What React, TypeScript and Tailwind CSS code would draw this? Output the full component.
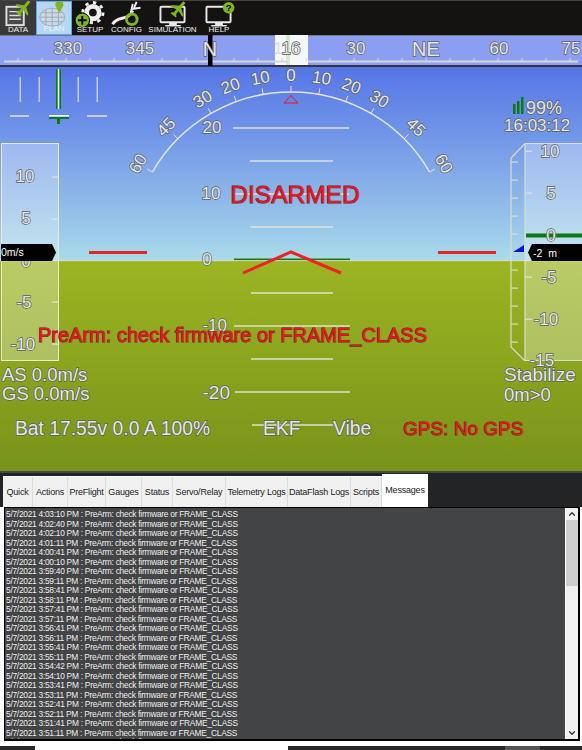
import { ChevronDown, ChevronUp } from 'lucide-react';

const tabs = [
  { label: 'Quick', w: 'w-[30px]' },
  { label: 'Actions', w: 'w-[35px]' },
  { label: 'PreFlight', w: 'w-[38px]' },
  { label: 'Gauges', w: 'w-[36px]' },
  { label: 'Status', w: 'w-[31px]' },
  { label: 'Servo/Relay', w: 'w-[53px]' },
  { label: 'Telemetry Logs', w: 'w-[62px]' },
  { label: 'DataFlash Logs', w: 'w-[63px]' },
  { label: 'Scripts', w: 'w-[31px]' },
];

const times = [
  '4:03:10', '4:02:40', '4:02:10', '4:01:11', '4:00:41', '4:00:10', '3:59:40', '3:59:11', '3:58:41',
  '3:58:11', '3:57:41', '3:57:11', '3:56:41', '3:56:11', '3:55:41', '3:55:11', '3:54:42', '3:54:10',
  '3:53:41', '3:53:11', '3:52:41', '3:52:11', '3:51:41', '3:51:11', '3:50:41',
];

// x position on the compass for a heading relative to north
const compassX = (deg: number) => 210 + deg * 4.8;

function Plane({ x, y }: { x: number; y: number }) {
  return (
    <g transform={`translate(${x} ${y}) rotate(40)`} className="fill-[#7fb51e]">
      <path d="M-1.5 -9 L1.5 -9 L1.5 -2 L8 2 L8 4 L1.5 2 L1.5 6 L3.5 8 L3.5 9 L-3.5 9 L-3.5 8 L-1.5 6 L-1.5 2 L-8 4 L-8 2 L-1.5 -2 Z" />
    </g>
  );
}

function Monitor() {
  return (
    <>
      <rect x="5" y="6" width="25" height="16" rx="1" className="fill-none stroke-[#e8e8e8] stroke-2" />
      <path d="M14 22 V25 H10 V26.5 H26 V25 H22 V22" className="fill-[#e8e8e8]" />
    </>
  );
}

function ToolIcon({ name }: { name: string }) {
  return (
    <svg viewBox="0 0 36 28" className="w-[36px] h-[27px]">
      {name === 'data' && (
        <>
          <rect x="6" y="6" width="18" height="19" className="fill-[#4a4a4a] stroke-[#dddddd] stroke-2" />
          <path d="M9 11 H21 M9 15 H21 M9 19 H21" className="stroke-[#dddddd] stroke-[1.5]" />
          <Plane x={24} y={7} />
        </>
      )}
      {name === 'plan' && (
        <>
          <ellipse cx="16" cy="17" rx="14" ry="10" className="fill-[#cdd8e2] stroke-[#97a8b8]" />
          <path d="M2 17 H30 M4 12 H28 M4 22 H28 M9 9 V25 M16 7 V27 M23 9 V25" className="stroke-[#97a8b8] stroke-[1]" />
          <path d="M24 12 L20 5 A4.5 4.5 0 1 1 28 5 Z" className="fill-[#7fb51e]" />
        </>
      )}
      {name === 'setup' && (
        <>
          <circle cx="21" cy="12" r="6.5" className="fill-none stroke-[#eeeeee] stroke-[5]" />
          <circle cx="21" cy="12" r="10.5" className="fill-none stroke-[#eeeeee] stroke-[3]" strokeDasharray="3.5 4.7" />
          <circle cx="10" cy="20" r="7.5" className="fill-[#7fb51e] stroke-black" />
          <path d="M5.5 20 H14.5 M10 15.5 V24.5" className="stroke-black stroke-2" />
        </>
      )}
      {name === 'config' && (
        <>
          <path d="M3 24 C9 14 18 22 24 10" className="fill-none stroke-[#eeeeee] stroke-[3]" />
          <path d="M22 12 L24 3 M28 1 L25 8 L32 7" className="fill-none stroke-[#eeeeee] stroke-2" />
          <circle cx="23" cy="19" r="5.5" className="fill-none stroke-[#7fb51e] stroke-[3]" />
        </>
      )}
      {name === 'simulation' && (
        <>
          <Monitor />
          <Plane x={24} y={8} />
        </>
      )}
      {name === 'help' && (
        <>
          <Monitor />
          <circle cx="28" cy="7" r="6" className="fill-[#7fb51e]" />
          <text x="28" y="10.5" textAnchor="middle" className="fill-black text-[10px] font-bold">?</text>
        </>
      )}
    </svg>
  );
}

function ToolButton({ label, name, className }: { label: string; name: string; className: string }) {
  return (
    <div className={`flex flex-col items-center justify-start ${className}`}>
      <ToolIcon name={name} />
      <span className="text-[8px] leading-[10px] -mt-[3px]">{label}</span>
    </div>
  );
}

function HudText({ x, y, children, size = 'text-[17px]', anchor = 'middle', red = false }: {
  x: number; y: number; children: React.ReactNode; size?: string; anchor?: 'start' | 'middle' | 'end'; red?: boolean;
}) {
  return (
    <text
      x={x}
      y={y}
      textAnchor={anchor}
      className={`${size} [paint-order:stroke] ${red ? 'stroke-[1px] fill-[#f5101c] stroke-[#5c2a2a]' : 'stroke-[1.4px] fill-[#e6e6e6] stroke-[#5a5f60]'}`}
    >
      {children}
    </text>
  );
}

function Hud() {
  const ladder = [
    { y: 129, x1: 233, x2: 349 }, { y: 162, x1: 250, x2: 333 }, { y: 195, x1: 233, x2: 349 }, { y: 228, x1: 250, x2: 333 },
    { y: 294, x1: 251, x2: 333 }, { y: 327, x1: 234, x2: 350 }, { y: 360, x1: 251, x2: 333 }, { y: 393, x1: 235, x2: 350 },
    { y: 426, x1: 252, x2: 333 },
  ];
  const rollMarks = [
    { a: 0, t: '0' }, { a: 10, t: '10' }, { a: 20, t: '20' }, { a: 30, t: '30' }, { a: 45, t: '45' }, { a: 60, t: '60' },
    { a: -10, t: '10' }, { a: -20, t: '20' }, { a: -30, t: '30' }, { a: -45, t: '45' }, { a: -60, t: '60' },
  ];
  const compassTicks = Array.from({ length: 24 }, (_, i) => compassX(-40 + i * 5));

  return (
    <svg viewBox="0 36 582 436" className="w-[582px] h-[436px] block shrink-0">
      <defs>
        <linearGradient id="sky" x1="0" y1="0" x2="0" y2="1">
          <stop offset="0" stopColor="#5675e6" />
          <stop offset="0.35" stopColor="#7196e8" />
          <stop offset="0.7" stopColor="#8fbae8" />
          <stop offset="1" stopColor="#aadcea" />
        </linearGradient>
        <linearGradient id="ground" x1="0" y1="0" x2="0" y2="1">
          <stop offset="0" stopColor="#9cb522" />
          <stop offset="0.5" stopColor="#8aa41e" />
          <stop offset="1" stopColor="#78931a" />
        </linearGradient>
      </defs>

      {/* horizon */}
      <rect x="0" y="68" width="582" height="194" fill="url(#sky)" />
      <rect x="0" y="262" width="582" height="210" fill="url(#ground)" />
      <rect x="0" y="261" width="582" height="1.2" className="fill-[#d8d8c8]" />

      {/* compass */}
      <rect x="0" y="36" width="582" height="30" className="fill-[#8b9ef2]" />
      <rect x="0" y="35" width="582" height="2" className="fill-[#77797f]" />
      <rect x="0" y="66" width="582" height="2" className="fill-[#33353a]" />
      <rect x="275" y="36" width="33" height="30" className="fill-[#f4f8fb]" />
      <rect x="286" y="36" width="4" height="30" className="fill-[#d6ead0]" />
      <rect x="4" y="61.5" width="284" height="2" className="fill-[#d6d6d6]" />
      <rect x="308" y="61.5" width="270" height="2" className="fill-[#d6d6d6]" />
      {compassTicks.map((x) => (
        <rect key={x} x={x - 0.5} y="59" width="1" height="3" className="fill-[#d6d6d6]" />
      ))}
      <HudText x={68} y={55}>330</HudText>
      <HudText x={140} y={55}>345</HudText>
      <rect x="208" y="36" width="4.5" height="31" className="fill-black" />
      <HudText x={210} y={57} size="text-[20px]">N</HudText>
      <text x="278" y="55" textAnchor="middle" className="text-[17px] fill-[#dcdcdc]">1</text>
      <HudText x={291} y={55}>16</HudText>
      <HudText x={356} y={55}>30</HudText>
      <HudText x={426} y={57} size="text-[20px]">NE</HudText>
      <HudText x={499} y={55}>60</HudText>
      <HudText x={571} y={55}>75</HudText>

      {/* top left bars */}
      {[20, 39, 78, 97].map((x) => (
        <rect key={x} x={x - 0.5} y="78" width="1.5" height="25" className="fill-[#c8ccd0]" />
      ))}
      <rect x="56" y="70" width="5" height="40" className="fill-[#0a7a12]" />
      <rect x="57.7" y="70" width="1.6" height="40" className="fill-white" />
      <rect x="10" y="116" width="19" height="2" className="fill-[#c8ccc8]" />
      <rect x="87" y="116" width="20" height="2" className="fill-[#c8ccc8]" />
      <rect x="49" y="116" width="20" height="1.6" className="fill-white" />
      <path d="M49 118 H69 V120 H60 V125 H57 V120 H49 Z" className="fill-[#0a7a12]" />

      {/* roll arc */}
      <path d="M152.4 173 A160 160 0 0 1 429.6 173" className="fill-none stroke-[#e6e2d6] stroke-[1.5]" />
      {rollMarks.map((m) => {
        const r = (m.a * Math.PI) / 180;
        const lx = 291 + 177 * Math.sin(r);
        const ly = 253 - 177 * Math.cos(r);
        return (
          <g key={m.a}>
            <path
              d={`M${291 + 160 * Math.sin(r)} ${253 - 160 * Math.cos(r)} L${291 + 166 * Math.sin(r)} ${253 - 166 * Math.cos(r)}`}
              className="stroke-[#e6e2d6] stroke-[1]"
            />
            <g transform={`rotate(${m.a} ${lx} ${ly})`}>
              <HudText x={lx} y={ly + 6}>{m.t}</HudText>
            </g>
          </g>
        );
      })}
      <path d="M291 96.5 L298 104 H284 Z" className="fill-none stroke-[#f01010] stroke-[1]" />

      {/* pitch ladder */}
      {ladder.map((l) => (
        <rect key={l.y} x={l.x1} y={l.y - 0.7} width={l.x2 - l.x1} height="1.4" className="fill-[#e4e4dc]" />
      ))}
      <rect x="234" y="259.5" width="116" height="1.6" className="fill-[#1c7a12]" />
      <HudText x={212} y={134}>20</HudText>
      <HudText x={211} y={200}>10</HudText>
      <HudText x={207} y={266}>0</HudText>
      <HudText x={227} y={332} anchor="end">-10</HudText>
      <HudText x={230} y={400} anchor="end" size="text-[19px]">-20</HudText>

      {/* wings */}
      <rect x="89" y="251" width="58" height="1" className="fill-[#7fe8e8]" />
      <rect x="438" y="251" width="58" height="1" className="fill-[#7fe8e8]" />
      <rect x="89" y="252" width="58" height="3" className="fill-[#f02028]" />
      <rect x="438" y="252" width="58" height="3" className="fill-[#f02028]" />
      <path d="M243 274 L291 253 L341 274" className="fill-none stroke-[#f02028] stroke-[3]" />

      {/* speed tape */}
      <rect x="1.5" y="144.5" width="57" height="217" className="fill-white/30 stroke-[#ece8cc] stroke-[1]" />
      {[178, 220, 303, 345].map((y) => (
        <rect key={y} x="52" y={y - 0.5} width="6" height="1.2" className="fill-[#e4e4d4]" />
      ))}
      <HudText x={25} y={183}>10</HudText>
      <HudText x={26} y={225}>5</HudText>
      <HudText x={26} y={268}>0</HudText>
      <HudText x={24} y={309}>-5</HudText>
      <HudText x={23} y={351}>-10</HudText>
      <path d="M1 245 H52 L56 253.5 L52 262 H1 Z" className="fill-black" />
      <text x="1" y="257" className="fill-white text-[10.5px]">0m/s</text>

      {/* altitude tape */}
      <rect x="525" y="144" width="57" height="217" className="fill-white/30" />
      <path d="M582 144.5 H525 L511 159 V348 L524.5 361.5 H582 M525 144.5 V361.5" className="fill-none stroke-[#dcdcd0] stroke-[1.2]" />
      {[163, 181, 199, 217, 235, 253, 271, 289, 307, 325, 343].map((y) => (
        <rect key={y} x="511" y={y - 0.5} width="7" height="1.2" className="fill-[#dcdcd0]" />
      ))}
      {[152, 194, 236, 278, 320].map((y) => (
        <rect key={y} x="525" y={y - 0.5} width="7" height="1.4" className="fill-[#dcdcd0]" />
      ))}
      <rect x="526" y="234.5" width="56" height="4" className="fill-[#0a7a12]" />
      <HudText x={550} y={158}>10</HudText>
      <HudText x={551} y={200}>5</HudText>
      <HudText x={551} y={242}>0</HudText>
      <HudText x={549} y={284}>-5</HudText>
      <HudText x={546} y={326}>-10</HudText>
      <HudText x={542} y={367}>-15</HudText>
      <path d="M513 253 L524 246 V253 Z" className="fill-[#1010e0]" />
      <path d="M582 245 H532 L528 253.5 L532 262 H582 Z" className="fill-black" />
      <text x="533" y="257.5" className="fill-white text-[10.5px]" xmlSpace="preserve">-2  m</text>

      {/* status */}
      <rect x="513" y="105" width="2.5" height="10" className="fill-[#0a7a12]" />
      <rect x="517" y="102" width="2.5" height="13" className="fill-[#0a7a12]" />
      <rect x="521" y="98" width="2.5" height="17" className="fill-[#0a7a12]" />
      <HudText x={526} y={115} anchor="start" size="text-[18px]">99%</HudText>
      <HudText x={504} y={132} anchor="start">16:03:12</HudText>

      <HudText x={295} y={204} size="text-[24.5px]" red>DISARMED</HudText>
      <HudText x={38} y={343} anchor="start" size="text-[20px]" red>PreArm: check firmware or FRAME_CLASS</HudText>
      <HudText x={2} y={382} anchor="start" size="text-[18.5px]">AS 0.0m/s</HudText>
      <HudText x={2} y={401} anchor="start" size="text-[18.5px]">GS 0.0m/s</HudText>
      <HudText x={504} y={382} anchor="start" size="text-[19px]">Stabilize</HudText>
      <HudText x={504} y={402} anchor="start" size="text-[18.5px]">0m&gt;0</HudText>
      <HudText x={15} y={436} anchor="start" size="text-[19.3px]">Bat 17.55v 0.0 A 100%</HudText>
      <HudText x={263} y={436} anchor="start" size="text-[19.3px]">EKF</HudText>
      <HudText x={333} y={436} anchor="start" size="text-[19.3px]">Vibe</HudText>
      <HudText x={403} y={436} anchor="start" size="text-[19px]" red>GPS: No GPS</HudText>
    </svg>
  );
}

export default function App() {
  return (
    <div className="w-[582px] h-[750px] overflow-hidden flex flex-col bg-[#232426] font-['Liberation_Sans',sans-serif]">
      {/* Toolbar */}
      <div className="h-[35px] shrink-0 flex border-t border-[#444] bg-[#141312] text-[#eeeeee]">
        <ToolButton label="DATA" name="data" className="w-[36px] bg-[#3a3a3a]" />
        <ToolButton label="PLAN" name="plan" className="w-[36px] bg-[#b5d7f5] border border-[#5aa8e8] text-[#e8f4ff]" />
        <ToolButton label="SETUP" name="setup" className="w-[36px]" />
        <ToolButton label="CONFIG" name="config" className="w-[37px]" />
        <ToolButton label="SIMULATION" name="simulation" className="w-[55px]" />
        <ToolButton label="HELP" name="help" className="w-[38px]" />
      </div>

      <Hud />

      {/* Tabs */}
      <div className="h-[36px] shrink-0 flex items-start border-t-2 border-[#45474a] bg-[#232426]">
        <div className="w-[3px] shrink-0" />
        <div className="flex h-[32px] mt-[3px] border-t border-white">
          {tabs.map((t) => (
            <div
              key={t.label}
              className={`${t.w} h-full flex items-center justify-center bg-[#f0f0f0] border-r border-[#dcdcdc] text-[9px] tracking-[-0.2px] whitespace-nowrap text-[#222]`}
            >
              {t.label}
            </div>
          ))}
        </div>
        <div className="w-[46px] h-[34px] mt-[1px] flex items-center justify-center bg-white text-[9px] tracking-[-0.2px] text-[#222]">Messages</div>
      </div>

      {/* Messages */}
      <div className="h-[239px] shrink-0 flex bg-white pl-[4px] pr-[2px] pb-[5px]">
        <div className="flex-1 flex border border-black border-r-2 border-b-2 min-w-0">
          <div className="flex-1 min-w-0 overflow-hidden bg-[#434446] pl-[1px] pt-[2px] text-[8.4px] tracking-[-0.27px] leading-[9.52px] text-[#eeeeee] whitespace-nowrap">
            {times.map((t) => (
              <div key={t} className="h-[9.52px]">5/7/2021 {t} PM : PreArm: check firmware or FRAME_CLASS</div>
            ))}
          </div>
          <div className="w-[13px] shrink-0 flex flex-col items-center justify-between border-l border-white bg-[#f0f0f0]">
            <ChevronUp className="w-[10px] h-[12px] text-[#333]" strokeWidth={3} />
            <div className="w-full h-[66px] bg-[#cfcfcf] mb-auto" />
            <ChevronDown className="w-[10px] h-[12px] text-[#333]" strokeWidth={3} />
          </div>
        </div>
      </div>

      {/* Bottom edge */}
      <div className="flex-1 flex bg-[#2a2a2a]">
        <div className="w-[35px]" />
        <div className="w-[253px] bg-white" />
        <div className="w-[217px]" />
        <div className="w-[35px] bg-[#555]" />
      </div>
    </div>
  );
}
